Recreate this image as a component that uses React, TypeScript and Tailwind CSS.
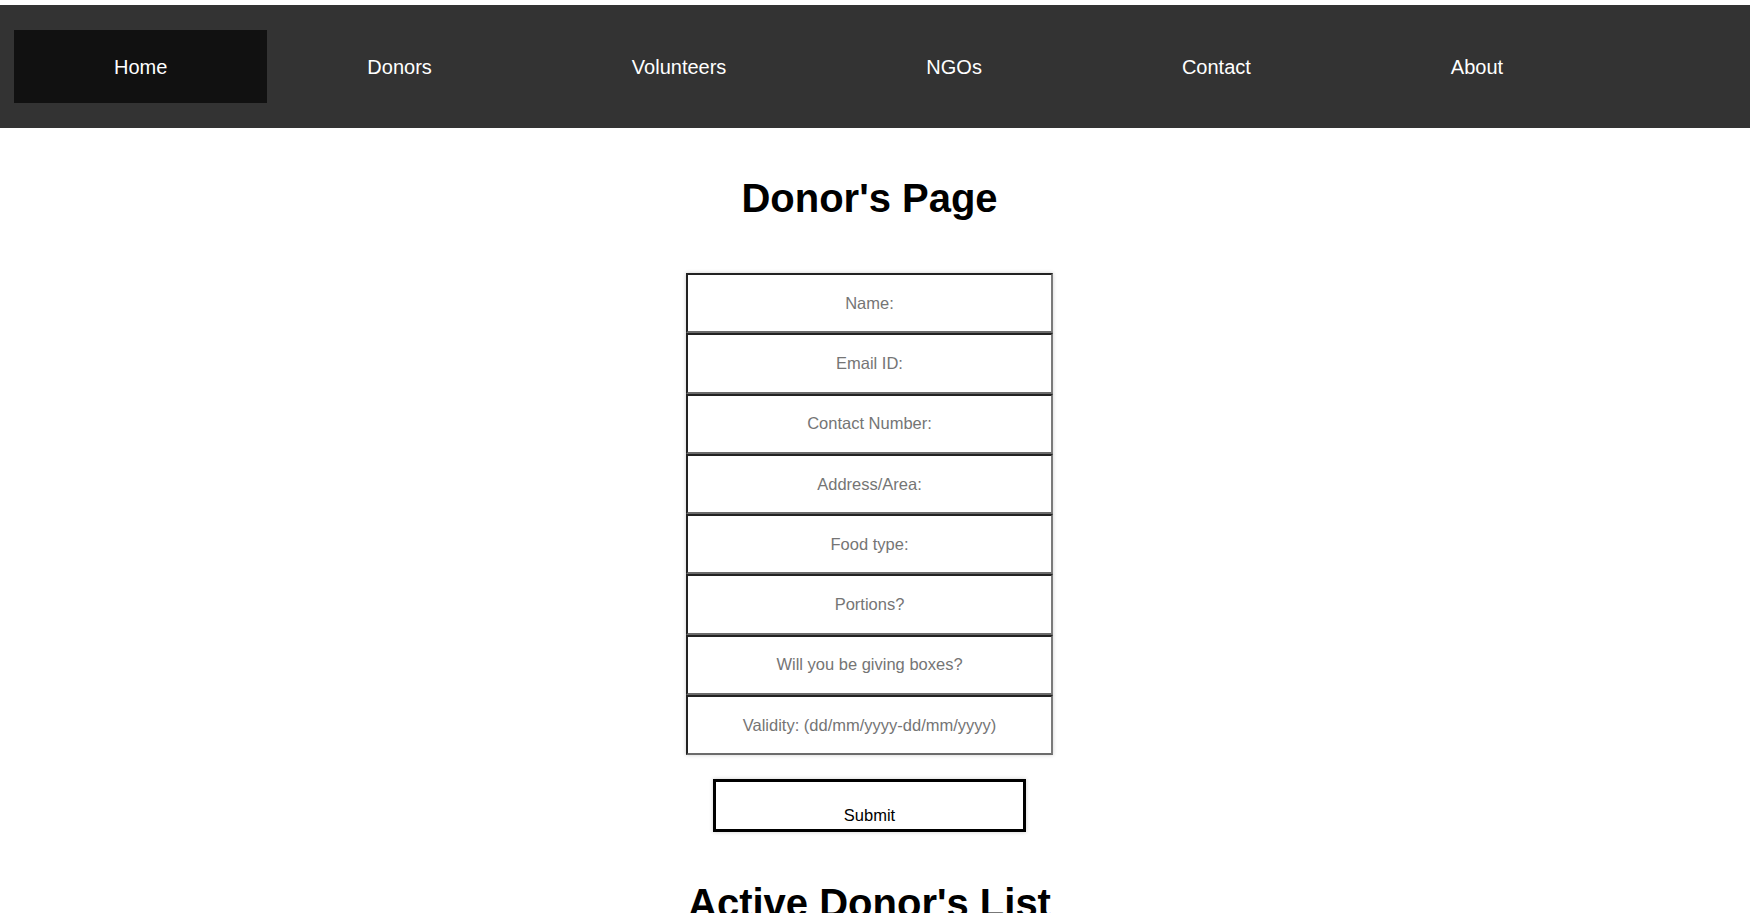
import React from "react";

const links = ["Home", "Donors", "Volunteers", "NGOs", "Contact", "About"];

const fields = [
  "Name:",
  "Email ID:",
  "Contact Number:",
  "Address/Area:",
  "Food type:",
  "Portions?",
  "Will you be giving boxes?",
  "Validity: (dd/mm/yyyy-dd/mm/yyyy)",
];

export default function App() {
  return (
    <div className="min-h-[913px] bg-white font-['Liberation_Sans',Arial,sans-serif] overflow-hidden">
      <nav className="mt-[5px] w-[1750px] bg-[#333333] py-[25px] pl-[14px] flex">
        {links.map((l, i) => (
          <a
            key={l}
            href="#"
            className={
              "h-[73px] px-[100px] flex items-center text-[20px] text-white " +
              (i === 0 ? "bg-[#111111]" : "")
            }
          >
            {l}
          </a>
        ))}
      </nav>

      <div className="w-[1739px] flex flex-col items-center">
        <h1 className="mt-[47px] text-[40px] leading-[46px] font-bold text-black">
          Donor&apos;s Page
        </h1>

        <form
          className="mt-[52px] flex flex-col items-center"
          onSubmit={(e) => e.preventDefault()}
        >
          <div className="flex flex-col shadow-[0_0_4px_rgba(0,0,0,0.2)]">
            {fields.map((f) => (
              <input
                key={f}
                type="text"
                placeholder={f}
                className="w-[367px] h-[60.3px] border-2 border-t-[#222222] border-l-[#222222] border-b-[#6b6b6b] border-r-[#7a7a7a] bg-white text-center text-[16.5px] text-black placeholder:text-[#757575] outline-none"
              />
            ))}
          </div>

          <button
            type="submit"
            className="mt-[24px] w-[313px] h-[53px] border-[3px] border-black bg-white pt-[19px] text-[16.5px] leading-[18px] text-black shadow-[0_0_4px_rgba(0,0,0,0.2)]"
          >
            Submit
          </button>
        </form>

        <h1 className="mt-[48px] text-[40px] leading-[46px] font-bold text-black">
          Active Donor&apos;s List
        </h1>
      </div>
    </div>
  );
}
